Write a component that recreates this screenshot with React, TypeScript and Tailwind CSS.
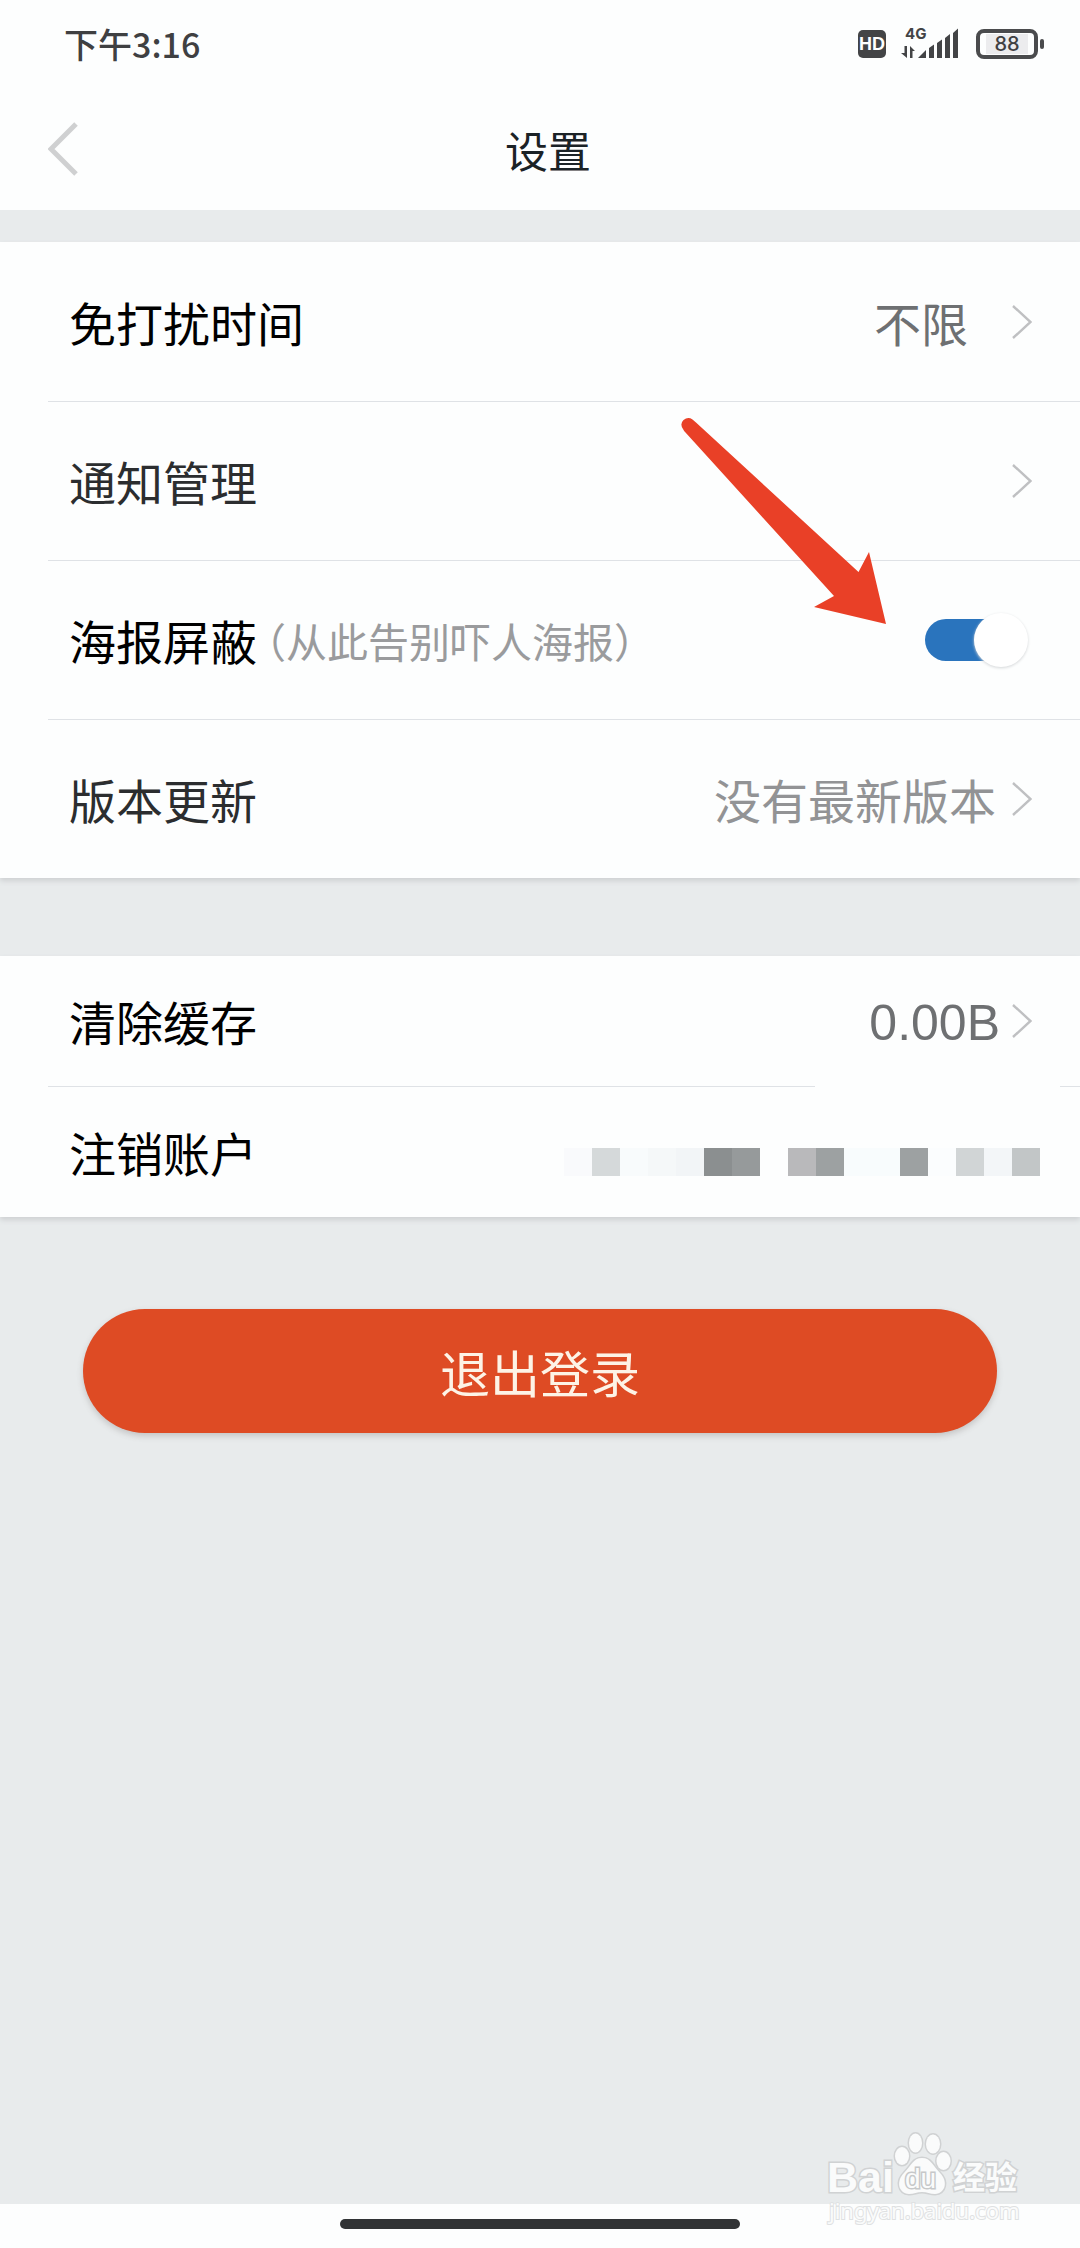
import React, { useState } from 'react';

const ACCOUNT_MOSAIC = [
  '#f9fafc', '#d5d9da', '#f8fbfc', '#f5f8f9', '#f2f5f7', '#8b8f90', '#969a9b', '#fdfefe', '#b9b9bb',
  '#9da1a2', '#f8fcfd', '#f8fcfd', '#9da1a2', '#fbfdfe', '#d1d5d6', '#f3f6f8', '#c2c6c7',
];

const Chevron = () => (
  <svg className="h-9 w-5 shrink-0" viewBox="0 0 20 36" fill="none" stroke="#bfc0c2" strokeWidth="2.4">
    <path d="M1 2 L18.500 18 L1 34" />
  </svg>
);

const Divider = () => <div className="ml-12 h-px bg-[#dfe2e6]" />;

type RowProps = {
  label: string;
  labelClass?: string;
  heightClass?: string;
  children?: React.ReactNode;
};

const Row = ({ label, labelClass = 'text-black', heightClass = 'h-[158px]', children }: RowProps) => (
  <button type="button" className={`flex w-full items-center justify-between pl-[69px] pr-12 text-left ${heightClass}`}>
    <span className={`text-[47px] leading-[60px] ${labelClass}`}>{label}</span>
    <span className="flex items-center">{children}</span>
  </button>
);

const StatusBar = () => (
  <div className="flex h-[88px] items-center justify-between pl-16 pr-9 text-[#3f4042]">
    <span className="text-[34px] leading-[40px] font-medium">下午3:16</span>
    <div className="flex items-center">
      <span className="flex h-7 w-7 items-center justify-center rounded-[5px] bg-[#434446] font-['Liberation_Sans'] text-[18px] leading-none font-bold text-white">
        HD
      </span>
      <svg className="ml-[14px] h-10 w-[60px]" viewBox="0 0 60 40" fill="#434446">
        <text x="5" y="15" fontFamily="Inter, sans-serif" fontSize="15" fontWeight="700">4G</text>
        <path d="M7 22 V34 L1 29 H4.500 V22 Z M10 34 V22 L15 27 H12.500 V34 Z" />
        <path d="M18 34 L26 26 V34 Z M29 34 V24 L34 20.500 V34 Z M37 34 V19 L42 15.500 V34 Z M45 34 V14 L50 10 V34 Z M53 34 V9 L58 4.500 V34 Z" />
      </svg>
      <div className="ml-4 flex h-[30px] w-[62px] items-center justify-center rounded-[8px] border-4 border-[#4a4b4d] font-['Inter'] text-[20px] leading-none font-medium">
        <span className="bg-[#ececee] px-2">88</span>
      </div>
      <span className="ml-[2px] h-[10px] w-1 rounded-[2px] bg-[#4a4b4d]" />
    </div>
  </div>
);

const PointerArrow = () => (
  <svg
    className="pointer-events-none absolute -top-[144px] right-[194px] h-[208px] w-[206px]"
    viewBox="0 0 206 208"
    fill="#e94027"
  >
    <path d="M12.500 2.500 Q8 -0.500 3.500 3 Q-0.500 7 3 12 Q4 14 5.500 15.500 L154 179 L134 190 L206 207 L189 135 L178.500 155 L16 5.500 Z" />
  </svg>
);

const Watermark = () => (
  <svg className="pointer-events-none absolute bottom-0 right-0 h-[148px] w-[300px]" viewBox="0 0 300 148">
    <g fill="#fafbfb" stroke="#d0d2d3" strokeWidth="3" paintOrder="stroke" fontFamily="'Liberation Sans', sans-serif">
      <text x="47" y="92" fontSize="43" fontWeight="700">Bai</text>
      <ellipse cx="122" cy="56" rx="7" ry="9" />
      <ellipse cx="135.500" cy="43" rx="6.500" ry="9.500" />
      <ellipse cx="153" cy="44" rx="7" ry="9.500" />
      <ellipse cx="163.500" cy="61" rx="7" ry="9" />
      <path d="M142 58 C151 58 153 66 160 73 C168 81 166 93 155 94 C150 94 147 92 142 92 C137 92 134 94 129 94 C118 93 116 81 124 73 C131 66 133 58 142 58 Z" />
      <text x="125" y="88" fontSize="28" stroke="#c6c8c9">du</text>
      <text x="173" y="89" fontSize="32" fontWeight="700" fontFamily="'Noto Sans CJK SC', sans-serif">经验</text>
      <text x="49" y="119" fontSize="22" strokeWidth="2" stroke="#dfe1e2" fontFamily="'Noto Sans', sans-serif">jingyan.baidu.com</text>
    </g>
  </svg>
);

const App = () => {
  const [blockPosters, setBlockPosters] = useState(true);

  return (
    <div className="relative flex min-h-screen flex-col overflow-hidden bg-[#e8ebec] font-['Noto_Sans_CJK_SC',sans-serif]">
      <header className="bg-[#fdfefe]">
        <StatusBar />
        <div className="grid h-[122px] grid-cols-[1fr_auto_1fr] items-center px-12">
          <button type="button" aria-label="返回" className="justify-self-start">
            <svg className="h-[54px] w-8" viewBox="0 0 32 54" fill="none" stroke="#cfd0d1" strokeWidth="5">
              <path d="M28 2 L3 27 L28 52" />
            </svg>
          </button>
          <h1 className="pl-4 text-[43px] leading-[56px] text-[#1b2226]">设置</h1>
        </div>
      </header>

      <main className="flex-1">
        <section className="mt-8 bg-[#fdfefe] pt-px shadow-[0_3px_5px_#cfd1d3]">
          <Row label="免打扰时间">
            <span className="mr-11 text-[47px] leading-[60px] text-[#6e7072]">不限</span>
            <Chevron />
          </Row>
          <Divider />
          <Row label="通知管理" labelClass="text-[#2b2d2f]">
            <Chevron />
          </Row>
          <Divider />
          <div className="relative flex h-[158px] items-center justify-between pl-[69px] pr-14">
            <label htmlFor="block-posters" className="flex items-center">
              <span className="text-[47px] leading-[60px] text-black">海报屏蔽</span>
              <span className="-ml-3 text-[41px] leading-[60px] text-[#9a9b9d]">（从此告别吓人海报）</span>
            </label>
            <input
              id="block-posters"
              type="checkbox"
              checked={blockPosters}
              onChange={(e) => setBlockPosters(e.target.checked)}
              className="relative h-[42px] w-[99px] appearance-none rounded-full bg-[#c9cccf] before:absolute before:-top-[6px] before:-left-1 before:h-[54px] before:w-[54px] before:rounded-full before:bg-white before:shadow-[0_1px_3px_#d4d6d8] checked:bg-[#2a74bd] checked:before:-right-1 checked:before:left-auto"
            />
            <PointerArrow />
          </div>
          <Divider />
          <Row label="版本更新" labelClass="text-[#2b2d2f]">
            <span className="mr-4 text-[47px] leading-[60px] text-[#929395]">没有最新版本</span>
            <Chevron />
          </Row>
        </section>

        <section className="mt-[78px] bg-[#fdfefe] shadow-[0_3px_5px_#cfd1d3]">
          <Row label="清除缓存" heightClass="h-[130px]">
            <span className="mr-3 pt-1 font-['Liberation_Sans'] text-[50px] leading-[60px] text-[#6e7072]">0.00B</span>
            <Chevron />
          </Row>
          <div className="flex justify-between pl-12">
            <div className="mr-[245px] h-px flex-1 bg-[#dfe2e6]" />
            <div className="h-px w-5 bg-[#dfe2e6]" />
          </div>
          <Row label="注销账户" heightClass="h-[130px]">
            <span className="-mr-2 flex pt-5">
              {ACCOUNT_MOSAIC.map((color, i) => (
                <span key={i} className="h-7 w-7" style={{ backgroundColor: color }} />
              ))}
            </span>
          </Row>
        </section>

        <div className="mt-[92px] px-[83px]">
          <button
            type="button"
            className="h-[124px] w-full rounded-full bg-[#de4b24] text-[50px] leading-[60px] text-[#fdf3e6] shadow-[0_3px_6px_#c4c4c4]"
          >
            退出登录
          </button>
        </div>
      </main>

      <footer className="flex h-11 justify-center bg-[#fdfefe] pt-[15px]">
        <div className="h-[10px] w-[400px] rounded-full bg-[#313335]" />
      </footer>

      <Watermark />
    </div>
  );
};

export default App;
